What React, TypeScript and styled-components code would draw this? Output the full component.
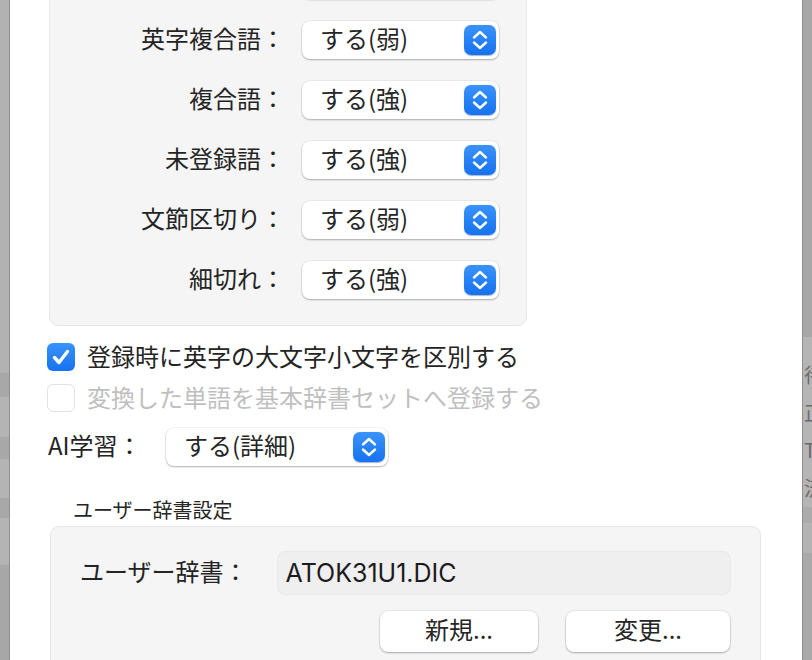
import React from "react";
import styled, { createGlobalStyle } from "styled-components";

const GlobalStyle = createGlobalStyle`
  html, body {
    margin: 0;
    padding: 0;
    background: #b0b0b0;
  }
  body {
    font-family: "Noto Sans CJK JP", "Noto Sans", sans-serif;
    -webkit-font-smoothing: antialiased;
  }
`;

const Screen = styled.div`
  display: flex;
  width: 812px;
  height: 660px;
  overflow: hidden;
`;

const Strip = styled.div`
  display: flex;
  flex-direction: column;
  flex: 0 0 9px;
  overflow: hidden;
`;

const Band = styled.div<{ $h: number; $tone: string }>`
  flex: 0 0 ${(p) => p.$h}px;
  background: ${(p) => p.$tone};
`;

const FillBand = styled.div<{ $tone: string }>`
  flex: 1;
  background: ${(p) => p.$tone};
`;

const GhostText = styled.div`
  display: flex;
  flex-direction: column;
  flex: 0 0 165px;
  padding-top: 19px;
  padding-left: 1px;
  box-sizing: border-box;
  background: #b5b5b5;
  color: #6a6a6a;
  font-size: 20px;
  line-height: 37.7px;
  white-space: nowrap;
`;

const Dialog = styled.div`
  flex: 1;
  display: flex;
  flex-direction: column;
  background: #ffffff;
  border-left: 1px solid #8f8f8f;
  border-right: 1px solid #8f8f8f;
  overflow: hidden;
  padding-left: 38px;
  color: #242424;
`;

const Group = styled.div`
  box-sizing: border-box;
  background: #f5f5f5;
  border: 1px solid #e7e7e7;
  border-radius: 9px;
`;

const MorphGroup = styled(Group)`
  width: 478px;
  margin-top: -61px;
  margin-left: 1px;
  padding: 21px 0 26px 0;
  display: grid;
  grid-template-columns: 235px 197px;
  column-gap: 17px;
  row-gap: 22px;
  align-items: center;
`;

const RowLabel = styled.div`
  box-sizing: border-box;
  height: 38px;
  padding-bottom: 4px;
  font-size: 24px;
  line-height: 34px;
  text-align: right;
  white-space: nowrap;
`;

const Popup = styled.div<{ $w?: number }>`
  box-sizing: border-box;
  display: flex;
  align-items: center;
  justify-content: space-between;
  width: ${(p) => (p.$w ? `${p.$w}px` : "100%")};
  height: 38px;
  padding: 0 3px 0 18px;
  background: #ffffff;
  border-radius: 8px;
  box-shadow: 0 0 0 0.5px rgba(0, 0, 0, 0.08), 0 1px 2px rgba(0, 0, 0, 0.28);
  font-size: 24px;
  color: #262626;
  white-space: nowrap;
`;

const PopupText = styled.span`
  line-height: 30px;
  margin-bottom: 4px;
`;

const StepperBox = styled.div`
  display: flex;
  width: 32px;
  height: 30px;
  border-radius: 7px;
  background: linear-gradient(#3a93fb, #1672ef);
  box-shadow: 0 0.5px 1px rgba(0, 40, 120, 0.35);
`;

const Stepper = () => (
  <StepperBox>
    <svg width="32" height="30" viewBox="0 0 32 30">
      <path
        d="M10 12.5 L16 7 L22 12.5 M10 17.5 L16 23 L22 17.5"
        fill="none"
        stroke="#ffffff"
        strokeWidth="2.4"
        strokeLinecap="round"
        strokeLinejoin="round"
      />
    </svg>
  </StepperBox>
);

const CheckRow = styled.label<{ $gap: number; $disabled?: boolean }>`
  display: flex;
  align-items: center;
  gap: 12px;
  margin-top: ${(p) => p.$gap}px;
  margin-left: -1px;
  height: 28px;
  font-size: 24px;
  color: ${(p) => (p.$disabled ? "#bfbfbf" : "#242424")};
  white-space: nowrap;
`;

const CheckText = styled.span`
  line-height: 28px;
  margin-bottom: 3px;
`;

const Box = styled.span<{ $on?: boolean }>`
  box-sizing: border-box;
  display: flex;
  flex: 0 0 28px;
  height: 28px;
  border-radius: 6px;
  background: ${(p) => (p.$on ? "linear-gradient(#3a93fb, #1672ef)" : "#ffffff")};
  border: ${(p) => (p.$on ? "none" : "1px solid #e2e2e2")};
`;

const AiRow = styled.div`
  display: flex;
  align-items: center;
  margin-top: 16px;
  height: 38px;
`;

const AiLabel = styled.div`
  width: 118px;
  font-size: 24px;
  line-height: 30px;
  margin-bottom: 4px;
  white-space: nowrap;
`;

const SectionTitle = styled.div`
  box-sizing: border-box;
  margin-top: 32px;
  margin-left: 25px;
  height: 28px;
  padding-bottom: 4px;
  font-size: 20px;
  line-height: 24px;
  color: #262626;
`;

const DictGroup = styled(Group)`
  width: 711px;
  margin-left: 2px;
  padding: 24px 29px 40px 29px;
  display: flex;
  flex-direction: column;
  gap: 16px;
`;

const FieldRow = styled.div`
  display: flex;
  align-items: center;
  gap: 29px;
`;

const FieldLabel = styled.div`
  font-size: 24px;
  line-height: 30px;
  margin-bottom: 5px;
  white-space: nowrap;
`;

const Field = styled.div`
  box-sizing: border-box;
  flex: 1;
  height: 44px;
  display: flex;
  align-items: center;
  padding-left: 8px;
  padding-bottom: 1px;
  background: #efefef;
  border: 1px solid #e8e8e8;
  border-radius: 8px;
  font-family: Inter, "Noto Sans CJK JP", sans-serif;
  font-size: 25px;
  color: #1c1c1c;
`;

const ButtonRow = styled.div`
  display: flex;
  justify-content: flex-end;
  gap: 28px;
  padding-right: 1px;
`;

const Button = styled.button<{ $w: number }>`
  width: ${(p) => p.$w}px;
  height: 41px;
  border: none;
  border-radius: 8px;
  background: #ffffff;
  box-shadow: 0 0 0 0.5px rgba(0, 0, 0, 0.1), 0 1px 2px rgba(0, 0, 0, 0.28);
  font-family: "Noto Sans CJK JP", sans-serif;
  font-size: 24px;
  line-height: 30px;
  color: #262626;
  padding: 0 0 5px 0;
`;

const rows = [
  { label: "英字複合語：", value: "する(弱)" },
  { label: "複合語：", value: "する(強)" },
  { label: "未登録語：", value: "する(強)" },
  { label: "文節区切り：", value: "する(弱)" },
  { label: "細切れ：", value: "する(強)" },
];

const App = () => {
  return (
    <>
      <GlobalStyle />
      <Screen>
        <Strip>
          <Band $h={373} $tone="#b2b2b2" />
          <Band $h={24} $tone="#a8a8a8" />
          <Band $h={40} $tone="#b4b4b4" />
          <Band $h={22} $tone="#a8a8a8" />
          <Band $h={39} $tone="#b4b4b4" />
          <Band $h={20} $tone="#a8a8a8" />
          <Band $h={47} $tone="#b4b4b4" />
          <FillBand $tone="#a7a7a7" />
        </Strip>
        <Dialog>
          <MorphGroup>
            {/* row scrolled above the visible area: only its popup's lower edge shows */}
            <RowLabel />
            <Popup />
            {rows.map((r) => (
              <React.Fragment key={r.label}>
                <RowLabel>{r.label}</RowLabel>
                <Popup>
                  <PopupText>{r.value}</PopupText>
                  <Stepper />
                </Popup>
              </React.Fragment>
            ))}
          </MorphGroup>
          <CheckRow $gap={17}>
            <Box $on>
              <svg width="28" height="28" viewBox="0 0 28 28">
                <path
                  d="M7.5 14.5 L12 19.5 L20.5 8.5"
                  fill="none"
                  stroke="#ffffff"
                  strokeWidth="3.4"
                  strokeLinecap="round"
                  strokeLinejoin="round"
                />
              </svg>
            </Box>
            <CheckText>登録時に英字の大文字小文字を区別する</CheckText>
          </CheckRow>
          <CheckRow $gap={13} $disabled>
            <Box />
            <CheckText>変換した単語を基本辞書セットへ登録する</CheckText>
          </CheckRow>
          <AiRow>
            <AiLabel>AI学習：</AiLabel>
            <Popup $w={222}>
              <PopupText>する(詳細)</PopupText>
              <Stepper />
            </Popup>
          </AiRow>
          <SectionTitle>ユーザー辞書設定</SectionTitle>
          <DictGroup>
            <FieldRow>
              <FieldLabel>ユーザー辞書：</FieldLabel>
              <Field>ATOK31U1.DIC</Field>
            </FieldRow>
            <ButtonRow>
              <Button $w={158}>新規...</Button>
              <Button $w={164}>変更...</Button>
            </ButtonRow>
          </DictGroup>
        </Dialog>
        <Strip>
          <Band $h={337} $tone="#a7a7a7" />
          <GhostText>
            <span>待</span>
            <span>正</span>
            <span>T</span>
            <span>済</span>
          </GhostText>
          <Band $h={16} $tone="#ababab" />
          <Band $h={30} $tone="#b3b3b3" />
          <FillBand $tone="#a9a9a9" />
        </Strip>
      </Screen>
    </>
  );
};

export default App;
